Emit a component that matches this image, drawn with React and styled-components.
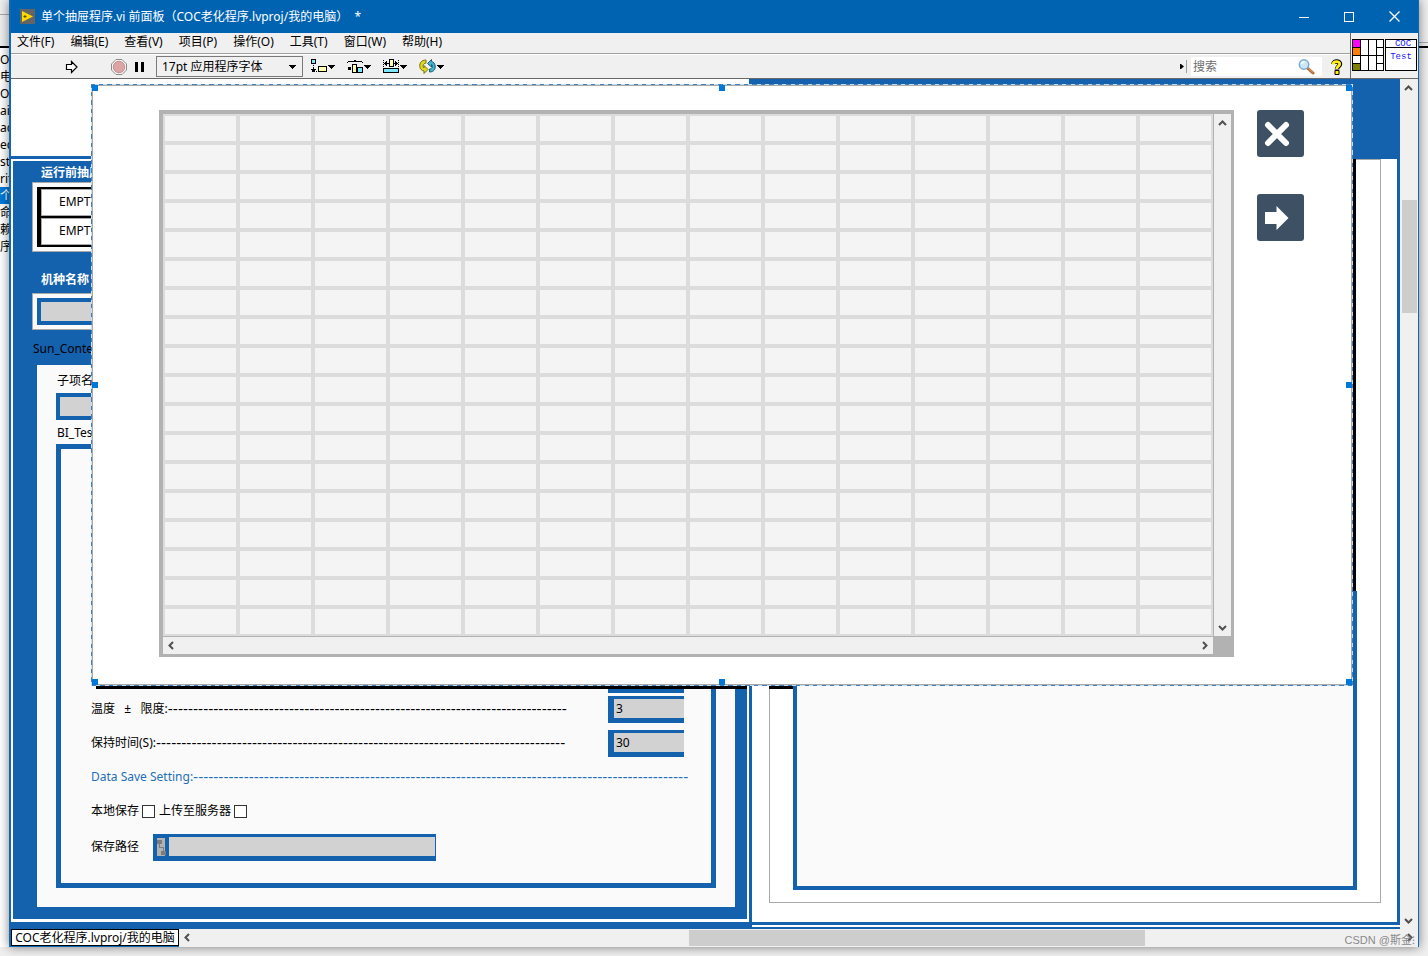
import React from "react";
import styled, { createGlobalStyle } from "styled-components";

const blue = "#1461ae";
const paper = "#fafafa";

const GlobalStyle = createGlobalStyle`
    * {
        box-sizing:border-box;
    }
    body {
        margin:0;
        font-family:"Noto Sans", "Noto Sans CJK SC", sans-serif;
        font-size:12px;
        line-height:18px;
        color:#000;
    }
    button, input, select {
        font:inherit;
        color:inherit;
        margin:0;
        padding:0;
        border:0;
        border-radius:0;
        background:none;
        appearance:none;
    }
    svg {
        display:block;
        flex:none;
    }
`

const Desktop = styled.div`
    display:grid;
    grid-template-columns:9px minmax(0, 1fr) 9px;
    min-height:100vh;
    padding-bottom:9px;
    background:#efefef;
    overflow:hidden;
`

const BackStrip = styled.div`
    display:flex;
    flex-direction:column;
    overflow:hidden;
    background:${({ $list }) => ($list ? "#fff" : "#f0f0f0")};
`

const BackBar = styled.div`
    flex:none;
    height:48px;
    margin-bottom:3px;
    background:#efefef;
    border-bottom:2px solid #000;
    padding-top:${({ $top }) => $top}px;

    &::before {
        content:"";
        display:block;
        border-top:1px solid #a8a8a8;
    }
`

const BackItem = styled.div`
    height:17px;
    line-height:17px;
    flex:none;
    white-space:nowrap;
    background:${({ $active }) => ($active ? "#0078d7" : "none")};
    color:${({ $active }) => ($active ? "#fff" : "#000")};
`

const Window = styled.div`
    position:relative;
    display:flex;
    flex-direction:column;
    border:1px solid #0f68b4;
    border-left-width:2px;
    border-top:0;
    background:#f0f0f0;
    box-shadow:0 0 10px rgba(0,0,0,.5);
`

const TitleBar = styled.header`
    display:flex;
    align-items:center;
    height:33px;
    padding-left:9px;
    background:#0063b1;
    color:#fff;

    h1 {
        flex:1;
        margin:0 0 0 6px;
        font-size:12px;
        font-weight:400;
        white-space:pre;
    }
`

const CaptionButton = styled.button`
    display:grid;
    place-items:center;
    width:45px;
    height:33px;

    &:last-child {
        width:47px;
    }
`

const Header = styled.div`
    display:flex;
    height:46px;
    border-bottom:1px solid #696969;
`

const Bars = styled.div`
    flex:1;
    min-width:0;
`

const MenuBar = styled.nav`
    display:flex;
    gap:16px;
    height:21px;
    padding-left:6px;
    border-bottom:1px solid #a0a0a0;

    button {
        height:18px;
        line-height:18px;
        white-space:nowrap;
    }
`

const ToolBar = styled.div`
    display:flex;
    align-items:center;
    height:24px;
    padding-left:54px;
    border-top:1px solid #fff;
`

const Tool = styled.button`
    display:flex;
    align-items:center;
    margin-right:${({ $after }) => $after || "0"};
`

const FontPicker = styled.div`
    position:relative;
    width:147px;
    margin-right:8px;

    select {
        width:100%;
        height:21px;
        padding-left:5px;
        border:1px solid #7a7a7a;
        line-height:18px;
    }
    svg {
        position:absolute;
        right:7px;
        top:9px;
        pointer-events:none;
    }
`

const Search = styled.label`
    display:flex;
    align-items:center;
    width:131px;
    height:19px;
    margin:0 9px 0 4px;
    padding-right:7px;
    background:#fff;

    input {
        flex:1;
        min-width:0;
        padding-left:2px;
    }
    input::placeholder {
        color:#6d6d6d;
        opacity:1;
    }
`

const Divider = styled.span`
    width:1px;
    height:13px;
    margin-left:2px;
    background:#a0a0a0;
`

const IconPane = styled.div`
    display:flex;
    gap:1px;
    width:68px;
    padding:6px 1px;
    border-left:1px solid #696969;
`

const ViIcon = styled.div`
    width:32px;
    height:32px;
    border:1px solid #000;
    background:#fff;
    color:#1818ff;
    font-family:"Liberation Mono", monospace;
    font-size:9px;
    line-height:8px;
    text-align:center;

    div {
        height:8px;
        border-bottom:1px solid #000;
        padding-left:4px;
    }
    p {
        margin:5px 0 0;
    }
`

const Work = styled.div`
    flex:1;
    display:flex;
`

const Canvas = styled.main`
    position:relative;
    flex:1;
    min-width:0;
    display:flex;
    background:#fff;
`

const LeftSide = styled.section`
    flex:none;
    width:738px;
    display:flex;
    flex-direction:column;
    border-bottom:7px solid ${blue};
    padding-bottom:3px;
`

const LeftTop = styled.div`
    height:80px;
    margin-bottom:2px;
    border-bottom:3px solid ${blue};
`

const BluePanel = styled.div`
    flex:1;
    display:flex;
    flex-direction:column;
    margin:0 2px;
    padding:3px 12px 12px 19px;
    background:${blue};
`

const Caption = styled.div`
    height:18px;
    margin:${({ $m }) => $m || "0"};
    white-space:nowrap;
    color:${({ $light }) => ($light ? "#fff" : "#000")};
    font-weight:${({ $light }) => ($light ? 600 : 400)};
`

const Group = styled.div`
    width:330px;
    padding:4px;
    border:1px solid #a9a9a9;
    background:${paper};
`

const StateList = styled.div`
    display:grid;
    gap:2px;
    padding:2px 4px;
    background:#000;

    div {
        height:27px;
        padding-left:17px;
        border:1px solid #a9a9a9;
        background:#fff;
        line-height:24px;
    }
`

const BlueInput = styled.input`
    display:block;
    width:${({ $w }) => $w};
    height:27px;
    border:4px solid ${blue};
    background:#d2d2d2;
`

const Content = styled.div`
    flex:1;
    display:flex;
    flex-direction:column;
    margin:7px 0 0 5px;
    padding:7px 19px 19px;
    background:${paper};
`

const TestFrame = styled.form`
    flex:1;
    display:flex;
    flex-direction:column;
    justify-content:flex-end;
    margin-top:2px;
    padding:0 27px 17px 30px;
    border:5px solid ${blue};
`

const Row = styled.div`
    display:flex;
    align-items:center;
    height:${({ $h }) => $h || 34}px;
    white-space:pre;
    color:${({ $blue }) => ($blue ? "#1f6fb8" : "#000")};

    > label, > span {
        display:flex;
        align-items:center;
    }
`

// hyphens in a wider face, they fill the row up to the field
const Leader = styled.i`
    font:14px/18px "DejaVu Sans", sans-serif;
`

const NumberInput = styled.input`
    width:76px;
    height:27px;
    margin-left:auto;
    padding-left:2px;
    border:solid ${blue};
    border-width:3px 0 5px 6px;
    background:#d2d2d2;
`

const Tick = styled.input`
    && {
        width:13px;
        height:13px;
        margin:0 4px 0 3px;
        border:1px solid #333;
        background:#fff;
    }
    &&:checked {
        background:${blue};
    }
`

const PathField = styled.span`
    display:flex;
    width:283px;
    height:27px;
    margin-left:14px;
    padding:3px 1px 5px 4px;
    background:${blue};

    input {
        flex:1;
        min-width:0;
        height:19px;
        margin-left:3px;
        background:#d2d2d2;
    }
`

const RightSide = styled.section`
    flex:1;
    display:flex;
    flex-direction:column;
    border-left:3px solid ${blue};
    border-bottom:2px solid ${blue};
    padding-bottom:2px;
`

const RightTop = styled.div`
    height:80px;
    background:${blue};
`

const RightBody = styled.div`
    flex:1;
    display:flex;
    padding:0 16px 19px 17px;
    border:solid ${blue};
    border-width:0 3px 3px 0;
`

const RightGroup = styled.div`
    flex:1;
    display:flex;
    padding:431px 23px 12px;
    border:1px solid #a9a9a9;
`

const Plot = styled.div`
    flex:1;
    border:4px solid ${blue};
    background:${paper};
`

// black edges that stick out from under the floating panel
const Edge = styled.div`
    position:absolute;
    background:#000;
    ${({ $side }) => $side === "right"
        ? "top:80px; right:44px; width:3px; height:432px;"
        : "top:607px; height:3px;"}
    ${({ $side }) => $side === "left" && "left:85px; width:651px;"}
    ${({ $side }) => $side === "middle" && "left:758px; width:24px;"}
`

const Floating = styled.div`
    position:absolute;
    left:80px;
    right:47px;
    top:5px;
    padding:1px;
    background:repeating-linear-gradient(135deg, #3f80bd 0 3px, #c8dcea 3px 6px);
`

const FloatingBody = styled.div`
    display:flex;
    gap:23px;
    padding:24px 47px 27px 66px;
    border:1px solid #a9a9a9;
    background:#fff;
`

const Handle = styled.span`
    position:absolute;
    width:6px;
    height:6px;
    background:#0078d7;
    ${({ $y }) => ({ top: "top:1px;", mid: "top:calc(50% - 3px);", bottom: "bottom:1px;" })[$y]}
    ${({ $x }) => ({ left: "left:1px;", mid: "left:calc(50% - 3px);", right: "right:1px;" })[$x]}
`

const TableBox = styled.div`
    flex:1;
    display:grid;
    grid-template-columns:minmax(0, 1fr) 18px;
    border:solid #b2b2b2;
    border-width:4px 3px 3px 4px;
    background:#b2b2b2;
`

const Grid = styled.table`
    width:100%;
    table-layout:fixed;
    border-collapse:separate;
    border-spacing:0;

    td {
        height:29px;
        padding:0;
        border:2px solid #dcdcdc;
        background:#f4f4f4;
    }
`

const Scroll = styled.div`
    display:flex;
    flex-direction:${({ $vertical }) => ($vertical ? "column" : "row")};
    justify-content:space-between;
    flex:${({ $grow }) => ($grow ? "1" : "none")};
    ${({ $vertical }) => ($vertical ? "width:18px; padding-top:1px;" : "height:18px;")}
    border:0 solid #b2b2b2;
    ${({ $vertical, $line }) => $line && ($vertical ? "border-left-width:1px;" : "border-top-width:1px;")}
    background:#f0f0f0;

    button {
        display:grid;
        place-items:center;
        flex:none;
        width:17px;
        height:17px;
    }
`

const Lane = styled.div`
    flex:1;
    display:flex;
    flex-direction:${({ $vertical }) => ($vertical ? "column" : "row")};
`

const Thumb = styled.div`
    background:#cdcdcd;
    ${({ $vertical }) => ($vertical
        ? "margin:103px 1px 0 2px; height:113px;"
        : "margin:1px 0 1px 493px; width:456px;")}
`

const SideButtons = styled.div`
    display:flex;
    flex-direction:column;
    gap:37px;

    button {
        width:47px;
        height:47px;
        border-radius:3px;
        background:#3e5064;
    }
`

const StatusBar = styled.footer`
    display:flex;
    height:17px;
`

const ProjectTab = styled.button`
    flex:none;
    width:168px;
    border:1px solid #000;
    background:#fff;
    line-height:15px;
    white-space:nowrap;
`

const Watermark = styled.div`
    position:absolute;
    right:3px;
    bottom:-3px;
    color:#8a8a8a;
    font-family:"Liberation Sans", "Noto Sans CJK SC", sans-serif;
    font-size:11px;
    white-space:nowrap;
`

function Caret() {
    return (
        <svg width="7" height="4" shapeRendering="crispEdges">
            <path d="M0 0h7v1h-1v1h-1v1h-1v1h-1v-1h-1v-1h-1v-1h-1z" fill="#000" />
        </svg>
    )
}

const chevrons = {
    up: "M1 6L4.5 2.5L8 6",
    down: "M1 3L4.5 6.5L8 3",
    left: "M6 1L2.5 4.5L6 8",
    right: "M3 1L6.5 4.5L3 8",
}

function Chevron({ to }) {
    return (
        <svg width="9" height="9">
            <path d={chevrons[to]} fill="none" stroke="#505050" strokeWidth="2" />
        </svg>
    )
}

function ScrollBar({ vertical, line, grow, thumb }) {
    return (
        <Scroll $vertical={vertical} $line={line} $grow={grow}>
            <button type="button" aria-label={vertical ? "Up" : "Left"}>
                <Chevron to={vertical ? "up" : "left"} />
            </button>
            <Lane $vertical={vertical}>{thumb && <Thumb $vertical={vertical} />}</Lane>
            <button type="button" aria-label={vertical ? "Down" : "Right"}>
                <Chevron to={vertical ? "down" : "right"} />
            </button>
        </Scroll>
    )
}

function AppIcon() {
    return (
        <svg width="15" height="15">
            <rect width="15" height="15" fill="#646464" />
            <path d="M2 2L13 7.5L2 13z" fill="#ffd800" />
            <path d="M3.500 7.500h3M5 6v3" stroke="#55501c" />
        </svg>
    )
}

function AlignIcon() {
    return (
        <svg width="17" height="16" shapeRendering="crispEdges">
            <path d="M0 0h5v5h-5z" fill="#000" />
            <path d="M1 1h3v3h-3z" fill="#7fe6ff" />
            <path d="M2 6h1v1h-1zM2 8h1v2h2v1h-1v1h-1v1h-1v-1h-1v-1h-1v-1h2zM1 12h1v1h-1zM3 12h1v1h-1zM5 12h1v1h-1z" fill="#000" />
            <path d="M7 7h9v6h-9z" fill="#000" />
            <path d="M8 8h7v4h-7z" fill="#ffffb0" />
        </svg>
    )
}

function DistributeIcon() {
    return (
        <svg width="17" height="16" shapeRendering="crispEdges">
            <path d="M0 3h1v-1h6v-1h2v1h6v1h1v1h-1v-1h-14v1h-1z" fill="#000" />
            <path d="M1 8h3v3h-3z" fill="#000" />
            <path d="M5 5h5v9h-5z" fill="#000" />
            <path d="M6 6h3v7h-3z" fill="#ffffb0" />
            <path d="M10 8h6v6h-6z" fill="#000" />
            <path d="M11 9h4v4h-4z" fill="#7fe6ff" />
        </svg>
    )
}

function ResizeIcon() {
    return (
        <svg width="17" height="16" shapeRendering="crispEdges">
            <path d="M.5 1v9M15.500 1v9" stroke="#000" strokeDasharray="1 1" />
            <path d="M1 4h1v-1h1v-1h1v2h2v1h-2v2h-1v-1h-1v-1h-1zM15 4h-1v-1h-1v-1h-1v2h-2v1h2v2h1v-1h1v-1h1z" fill="#000" />
            <path d="M6 0h5v8h-5z" fill="#000" />
            <path d="M7 1h3v6h-3z" fill="#ffffb0" />
            <path d="M0 9h16v5h-16z" fill="#000" />
            <path d="M1 10h14v3h-14z" fill="#7fe6ff" />
        </svg>
    )
}

function ReorderIcon() {
    return (
        <svg width="18" height="15">
            <path d="M7 1C2.500 1 .5 4 .8 7.500C1 10 2.500 11.500 5 12v2.500l4-4-4-4v2.500C3 7.500 4 4.500 7 4z" fill="#e3d91e" stroke="#77700c" />
            <path d="M10.500 13c4.500 0 6-3 5.700-6C16 4.500 14.500 3 12.500 2.500V.5l-4 4 4 3.500V5.500c2 1 1 4.500-2 4.500z" fill="#43b3cf" stroke="#1b6278" />
        </svg>
    )
}

function Magnifier() {
    return (
        <svg width="17" height="16">
            <path d="M10 9.500l5 4.500" stroke="#b5652c" strokeWidth="3" strokeLinecap="round" />
            <path d="M10.500 9.500l4.500 4" stroke="#e9a66c" />
            <circle cx="6" cy="5.500" r="4.700" fill="#c9e9fb" stroke="#7fa9cf" strokeWidth="1.500" />
            <path d="M3.500 5c.3-1.500 1.500-2.300 3-2.300" stroke="#fff" strokeWidth="1.500" fill="none" />
        </svg>
    )
}

function HelpIcon() {
    return (
        <svg width="12" height="16">
            <path d="M2.500 5C2.500 1.500 9 1.500 9 5c0 2.200-3 2.300-3 5.500" fill="none" stroke="#000" strokeWidth="4.500" />
            <rect x="3.500" y="11" width="5" height="5" rx="1" fill="#000" />
            <path d="M2 5.500C2.500 1.800 8.700 1.800 8.700 5c0 2.200-3 2.300-3 5" fill="none" stroke="#ffee10" strokeWidth="2.800" />
            <rect x="4.500" y="12" width="3" height="3" fill="#ffee10" />
        </svg>
    )
}

function ConnectorPane() {
    return (
        <svg width="32" height="32" shapeRendering="crispEdges">
            <rect x=".5" y=".5" width="31" height="31" fill="#fff" stroke="#000" />
            <rect x="1" y="1" width="7" height="7" fill="#f0f" />
            <rect x="1" y="9" width="7" height="7" fill="#ff8000" />
            <rect x="1" y="25" width="7" height="6" fill="#808000" />
            <path d="M8.500 0v32M16.500 0v32M24.500 0v32M0 16.500h32M0 8.500h8M0 24.500h8M24 8.500h8M24 24.500h8" stroke="#000" />
        </svg>
    )
}

function PathIcon() {
    return (
        <svg width="9" height="19" shapeRendering="crispEdges">
            <rect y="1" width="8" height="18" fill="#b2b2b2" />
            <path d="M2.500 6v4.500h4v4" fill="none" stroke="#7d7d7d" />
            <rect y="3" width="5" height="4" fill="#7d7d7d" />
            <rect x="4" y="14" width="5" height="4" fill="#7d7d7d" />
        </svg>
    )
}

const menus = ["文件(F)", "编辑(E)", "查看(V)", "项目(P)", "操作(O)", "工具(T)", "窗口(W)", "帮助(H)"]
const projectItems = ["OC", "电脑", "OC", "ain", "ac", "ec", "st", "rit", "个", "命", "赖", "序"]
const handles = [
    ["left", "top"], ["mid", "top"], ["right", "top"],
    ["left", "mid"], ["right", "mid"],
    ["left", "bottom"], ["mid", "bottom"], ["right", "bottom"],
]
const tableRows = Array.from({ length: 18 })
const tableCols = Array.from({ length: 14 })

function TopBars() {
    return (
        <>
            <TitleBar>
                <AppIcon />
                <h1>单个抽屉程序.vi 前面板（COC老化程序.lvproj/我的电脑）  *</h1>
                <CaptionButton type="button" aria-label="Minimize">
                    <svg width="10" height="10"><path d="M0 5.500h10" stroke="#fff" /></svg>
                </CaptionButton>
                <CaptionButton type="button" aria-label="Maximize">
                    <svg width="10" height="10"><rect x=".5" y=".5" width="9" height="9" fill="none" stroke="#fff" /></svg>
                </CaptionButton>
                <CaptionButton type="button" aria-label="Close">
                    <svg width="11" height="11"><path d="M.5 .5l10 10M10.500 .5l-10 10" stroke="#fff" strokeWidth="1.300" /></svg>
                </CaptionButton>
            </TitleBar>
            <Header>
                <Bars>
                    <MenuBar>
                        {menus.map(menu => <button type="button" key={menu}>{menu}</button>)}
                    </MenuBar>
                    <ToolBar>
                        <Tool type="button" aria-label="Run" $after="32px">
                            <svg width="14" height="14">
                                <path d="M1.500 4.500h5v-3l5.500 5.500-5.500 5.500v-3h-5z" fill="#fff" stroke="#000" strokeWidth="1.200" />
                            </svg>
                        </Tool>
                        <Tool type="button" aria-label="Abort" $after="8px">
                            <svg width="16" height="16">
                                <path d="M5 .5h6l4.500 4.500v6l-4.500 4.500h-6l-4.500-4.500v-6z" fill="#f4f4f4" stroke="#8c8c8c" />
                                <circle cx="8" cy="8" r="5.700" fill="#dba5a5" stroke="#c58f8f" />
                            </svg>
                        </Tool>
                        <Tool type="button" aria-label="Pause" $after="12px">
                            <svg width="9" height="10"><path d="M0 0h3v10h-3zM6 0h3v10h-3z" /></svg>
                        </Tool>
                        <FontPicker>
                            <select aria-label="Font" defaultValue="17pt">
                                <option value="17pt">17pt 应用程序字体</option>
                            </select>
                            <Caret />
                        </FontPicker>
                        <Tool type="button" aria-label="Align" $after="12px"><AlignIcon /><Caret /></Tool>
                        <Tool type="button" aria-label="Distribute" $after="12px"><DistributeIcon /><Caret /></Tool>
                        <Tool type="button" aria-label="Resize" $after="12px"><ResizeIcon /><Caret /></Tool>
                        <Tool type="button" aria-label="Reorder" $after="auto"><ReorderIcon /><Caret /></Tool>
                        <svg width="4" height="5"><path d="M0 0h1l3 2.500-3 2.500h-1z" /></svg>
                        <Divider />
                        <Search>
                            <input type="text" placeholder="搜索" aria-label="搜索" />
                            <Magnifier />
                        </Search>
                        <Tool type="button" aria-label="Help" $after="7px"><HelpIcon /></Tool>
                    </ToolBar>
                </Bars>
                <IconPane>
                    <ConnectorPane />
                    <ViIcon>
                        <div>COC</div>
                        <p>Test</p>
                    </ViIcon>
                </IconPane>
            </Header>
        </>
    )
}

function SettingsPanel() {
    return (
        <LeftSide>
            <LeftTop />
            <BluePanel>
                <Caption $light $m="0 0 0 9px">运行前抽屉</Caption>
                <Group>
                    <StateList>
                        <div>EMPTY</div>
                        <div>EMPTY</div>
                    </StateList>
                </Group>
                <Caption $light $m="19px 0 4px 9px">机种名称</Caption>
                <Group>
                    <BlueInput $w="100%" aria-label="机种名称" />
                </Group>
                <Caption $m="10px 0 0 1px">Sun_Content</Caption>
                <Content>
                    <Caption $m="0 0 3px 1px">子项名称</Caption>
                    <BlueInput $w="300px" aria-label="子项名称" />
                    <Caption $m="4px 0 0 1px">BI_Test</Caption>
                    <TestFrame>
                        <Row $h={26}>
                            <NumberInput aria-label="温度" />
                        </Row>
                        <Row>
                            <label htmlFor="limit">温度   ±   限度:<Leader>{"-".repeat(79)}</Leader></label>
                            <NumberInput id="limit" defaultValue="3" />
                        </Row>
                        <Row>
                            <label htmlFor="hold">保持时间(S):<Leader>{"-".repeat(81)}</Leader></label>
                            <NumberInput id="hold" defaultValue="30" />
                        </Row>
                        <Row $blue>
                            <span>Data Save Setting:<Leader>{"-".repeat(98)}</Leader></span>
                        </Row>
                        <Row>
                            <label>本地保存<Tick type="checkbox" /></label>
                            <label>上传至服务器<Tick type="checkbox" /></label>
                        </Row>
                        <Row $h={38}>
                            <label htmlFor="path">保存路径</label>
                            <PathField>
                                <PathIcon />
                                <input id="path" />
                            </PathField>
                        </Row>
                    </TestFrame>
                </Content>
            </BluePanel>
        </LeftSide>
    )
}

function TablePanel() {
    return (
        <Floating>
            <FloatingBody>
                <TableBox>
                    <Grid>
                        <tbody>
                            {tableRows.map((_, r) => (
                                <tr key={r}>
                                    {tableCols.map((_, c) => <td key={c} />)}
                                </tr>
                            ))}
                        </tbody>
                    </Grid>
                    <ScrollBar vertical line />
                    <ScrollBar line />
                </TableBox>
                <SideButtons>
                    <button type="button" aria-label="Cancel">
                        <svg width="47" height="47">
                            <path d="M11 15L29 33M29 15L11 33" stroke="#fff" strokeWidth="6" strokeLinecap="round" />
                        </svg>
                    </button>
                    <button type="button" aria-label="Next">
                        <svg width="47" height="47">
                            <path d="M8 18h11.500v-6L31.500 24L19.500 36v-6H8z" fill="#fff" />
                        </svg>
                    </button>
                </SideButtons>
            </FloatingBody>
            {handles.map(([x, y]) => <Handle key={x + y} $x={x} $y={y} />)}
        </Floating>
    )
}

export default function App() {
    return (
        <>
            <GlobalStyle />
            <Desktop>
                <BackStrip $list>
                    <BackBar $top={14} />
                    {projectItems.map((item, i) => (
                        <BackItem key={i} $active={item === "个"}>{item}</BackItem>
                    ))}
                </BackStrip>
                <Window>
                    <TopBars />
                    <Work>
                        <Canvas>
                            <SettingsPanel />
                            <RightSide>
                                <RightTop />
                                <RightBody>
                                    <RightGroup>
                                        <Plot />
                                    </RightGroup>
                                </RightBody>
                            </RightSide>
                            <Edge $side="left" />
                            <Edge $side="middle" />
                            <Edge $side="right" />
                            <TablePanel />
                        </Canvas>
                        <ScrollBar vertical thumb />
                    </Work>
                    <StatusBar>
                        <ProjectTab type="button">COC老化程序.lvproj/我的电脑</ProjectTab>
                        <ScrollBar grow thumb />
                    </StatusBar>
                    <Watermark>CSDN @斯金⁝</Watermark>
                </Window>
                <BackStrip>
                    <BackBar $top={42} />
                </BackStrip>
            </Desktop>
        </>
    )
}
